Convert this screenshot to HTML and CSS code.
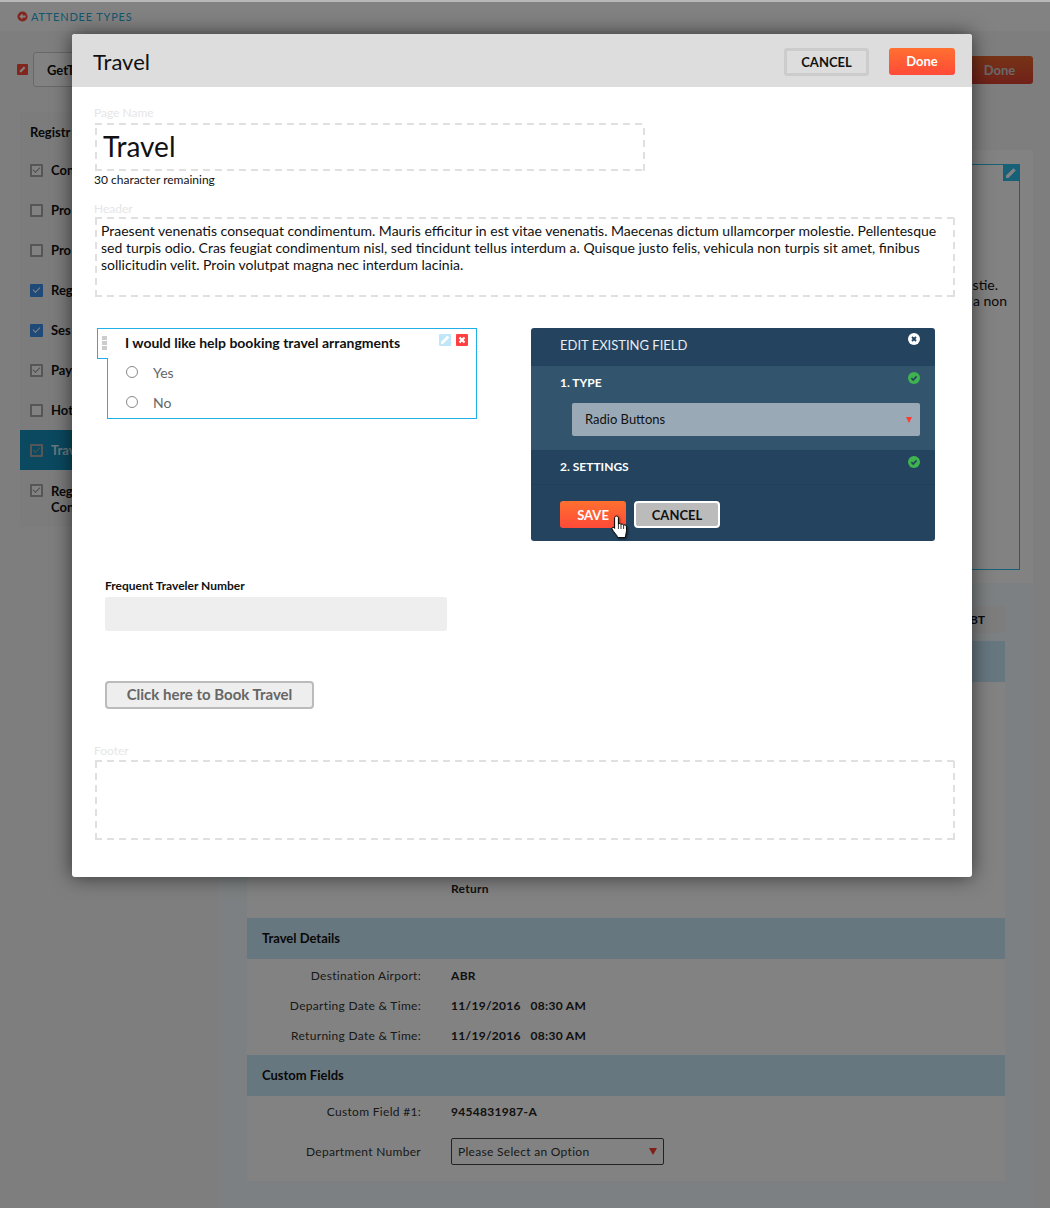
FILE: index.html
```html
<!DOCTYPE html>
<html lang="en">
<head>
    <meta charset="UTF-8">
    <meta name="viewport" content="width=device-width, initial-scale=1.0">
    <title>Travel - Edit Page</title>
    <link rel="stylesheet" href="styles.css">
</head>
<body>
    <div class="page">
        <div class="top-bar">
            <svg class="back-icon" viewBox="0 0 12 12"><circle cx="6" cy="6" r="5.5" fill="#ff4a38"/><path d="M2.5 6 6 2.8V5h3.5v2H6v2.2z" fill="#fff"/></svg>
            <span class="back-link">ATTENDEE TYPES</span>
        </div>

        <div class="title-row">
            <span class="edit-badge">
                <svg viewBox="0 0 12 12"><path d="M3 7.4 7.6 2.8 9.2 4.4 4.6 9H3z" fill="#fff"/></svg>
            </span>
            <div class="event-name">GetT</div>
            <div class="title-done">Done</div>
        </div>

        <div class="content">
            <aside class="sidebar">
                <h4>Registr</h4>
                <ul class="step-list">
                    <li class="step"><span class="box grey"></span>Con</li>
                    <li class="step"><span class="box"></span>Pro</li>
                    <li class="step"><span class="box"></span>Pro</li>
                    <li class="step"><span class="box blue"></span>Reg</li>
                    <li class="step"><span class="box blue"></span>Ses</li>
                    <li class="step"><span class="box grey"></span>Pay</li>
                    <li class="step"><span class="box"></span>Hot</li>
                    <li class="step active"><span class="box grey"></span>Trav</li>
                    <li class="step tall"><span class="box grey"></span>Reg<br>Con</li>
                </ul>
            </aside>

            <main class="main">
                <section class="preview">
                    <div class="preview-box">
                        <span class="preview-pencil">
                            <svg viewBox="0 0 16 16"><path d="M3 10.600 10.400 3.200 12.800 5.600 5.400 13H3z" fill="#fff"/></svg>
                        </span>
                        <p class="preview-line first">stie.</p>
                        <p class="preview-line">la non</p>
                    </div>
                </section>

                <section class="summary">
                    <div class="summary-actions"><span class="summary-btn">BT</span></div>
                    <div class="summary-card">
                        <div class="section-head"></div>
                        <div class="flight-rows">
                            <div class="row"><span class="row-label"></span><span class="row-value">Return</span></div>
                        </div>
                        <h3 class="section-head">Travel Details</h3>
                        <div class="detail-rows">
                            <div class="row"><span class="row-label">Destination Airport:</span><span class="row-value">ABR</span></div>
                            <div class="row"><span class="row-label">Departing Date &amp; Time:</span><span class="row-value">11/19/2016 &nbsp; 08:30 AM</span></div>
                            <div class="row"><span class="row-label">Returning Date &amp; Time:</span><span class="row-value">11/19/2016 &nbsp; 08:30 AM</span></div>
                        </div>
                        <h3 class="section-head">Custom Fields</h3>
                        <div class="custom-rows">
                            <div class="row"><span class="row-label">Custom Field #1:</span><span class="row-value">9454831987-A</span></div>
                            <div class="row select-row">
                                <span class="row-label">Department Number</span>
                                <div class="page-select">Please Select an Option<span class="caret"></span></div>
                            </div>
                        </div>
                    </div>
                </section>
            </main>
        </div>
    </div>

    <div class="overlay">
        <div class="modal">
            <div class="modal-head">
                <h2>Travel</h2>
                <div class="modal-actions">
                    <button class="btn-cancel">CANCEL</button>
                    <button class="btn-done">Done</button>
                </div>
            </div>

            <div class="modal-body">
                <label class="ghost-label">Page Name</label>
                <div class="dashed name-box">Travel</div>
                <p class="remaining">30 character remaining</p>

                <label class="ghost-label header-label">Header</label>
                <div class="dashed header-box">Praesent venenatis consequat condimentum. Mauris efficitur in est vitae venenatis. Maecenas dictum ullamcorper molestie. Pellentesque sed turpis odio. Cras feugiat condimentum nisl, sed tincidunt tellus interdum a. Quisque justo felis, vehicula non turpis sit amet, finibus sollicitudin velit. Proin volutpat magna nec interdum lacinia.</div>

                <div class="field-row">
                    <div class="field-card">
                        <span class="field-tab"><i></i><i></i><i></i></span>
                        <div class="field-tools">
                            <span class="tool tool-edit">
                                <svg viewBox="0 0 12 12"><path d="M2 8 8.400 1.600 10.400 3.600 4 10H2z" fill="#fff"/></svg>
                            </span>
                            <span class="tool tool-del">
                                <svg viewBox="0 0 12 12"><path d="M3.500 3.500 8.500 8.500M8.500 3.500 3.500 8.500" stroke="#fff" stroke-width="2.200"/></svg>
                            </span>
                        </div>
                        <div class="field-title">I would like help booking travel arrangments</div>
                        <div class="radio-line"><span class="radio"></span>Yes</div>
                        <div class="radio-line"><span class="radio"></span>No</div>
                    </div>

                    <div class="editor">
                        <div class="editor-title">EDIT EXISTING FIELD
                            <svg class="editor-icon close-icon" viewBox="0 0 12 12"><circle cx="6" cy="6" r="6" fill="#fff"/><path d="M4 4 8 8M8 4 4 8" stroke="#23435e" stroke-width="1.800"/></svg>
                        </div>
                        <div class="editor-type">
                            <div class="editor-step">1. TYPE
                                <svg class="editor-icon" viewBox="0 0 12 12"><circle cx="6" cy="6" r="6" fill="#3fb34f"/><path d="M3.400 6.200 5.200 8 8.600 4.400" fill="none" stroke="#23435e" stroke-width="1.700"/></svg>
                            </div>
                            <div class="editor-select">Radio Buttons<span class="caret red"></span></div>
                        </div>
                        <div class="editor-settings">
                            <div class="editor-step">2. SETTINGS
                                <svg class="editor-icon" viewBox="0 0 12 12"><circle cx="6" cy="6" r="6" fill="#3fb34f"/><path d="M3.400 6.200 5.200 8 8.600 4.400" fill="none" stroke="#23435e" stroke-width="1.700"/></svg>
                            </div>
                        </div>
                        <div class="editor-actions">
                            <button class="btn-save">SAVE</button>
                            <button class="btn-editor-cancel">CANCEL</button>
                            <svg class="hand" viewBox="0 0 17 24"><path d="M5.500 1C6.600 1 7.400 1.800 7.400 3V9C8 8.300 9.600 8.400 10 9.500 10.600 8.800 12.200 9 12.600 10.200 13.300 9.600 15.200 9.900 15.400 11.600 15.700 14 15.600 17 15 19 14.700 20 14.300 21 14.300 22.600H6.600C6.400 21 5.400 20 4.400 18.800 3.200 17.300 1.800 15.600 1 14 .5 12.800 2 11.700 3 12.600L3.600 13.400V3C3.600 1.800 4.400 1 5.500 1Z" fill="#fff" stroke="#000" stroke-width="1" stroke-linejoin="round"/><path d="M7.400 9V14M10 9.500V14M12.600 10.200V14" stroke="#000" stroke-width=".8" fill="none"/></svg>
                        </div>
                    </div>
                </div>

                <label class="input-label">Frequent Traveler Number</label>
                <div class="text-input"></div>

                <button class="btn-book">Click here to Book Travel</button>

                <label class="ghost-label footer-label">Footer</label>
                <div class="dashed footer-box"></div>
            </div>
        </div>
    </div>
</body>
</html>
```

FILE: styles.css
```css
* {
    margin: 0;
    padding: 0;
    box-sizing: border-box;
    font-family: 'Lato', 'Open Sans', sans-serif;
}

body {
    position: relative;
    height: 1208px;
    overflow: hidden;
    background-color: #f8f8f8;
    color: #111;
}

svg {
    display: block;
}

/* page behind the dialog */
.top-bar {
    display: flex;
    align-items: center;
    gap: 3px;
    height: 31px;
    padding-left: 17px;
    background-color: #fff;
    border-top: 2px solid #b8b8b8;
}

.back-icon {
    width: 11px;
    height: 11px;
}

.back-link {
    font-size: 11px;
    letter-spacing: 0.8px;
    color: #27a9d6;
}

.title-row {
    display: flex;
    align-items: center;
    height: 35px;
    margin-top: 21px;
    padding: 0 17px;
}

.edit-badge {
    display: flex;
    width: 11px;
    height: 11px;
    margin-right: 5px;
    background-color: #ff4a38;
    border-radius: 1px;
}

.event-name {
    width: 300px;
    height: 35px;
    padding: 9px 13px;
    font-size: 13px;
    font-weight: 700;
    background-color: #fff;
    border: 1px solid #ccc;
    border-radius: 3px;
}

.title-done {
    width: 67px;
    height: 28px;
    margin-left: auto;
    font-size: 13px;
    font-weight: 700;
    line-height: 28px;
    text-align: center;
    color: #ccc;
    background: linear-gradient(#e8642c, #dc4232);
    border-radius: 3px;
}

.content {
    display: grid;
    grid-template-columns: 198px 815px;
    align-items: start;
    margin: 25px 0 0 20px;
}

.sidebar {
    height: 415px;
    background-color: #f3f3f3;
}

.sidebar h4 {
    height: 38px;
    padding: 12px 0 0 10px;
    font-size: 13px;
}

.step {
    display: flex;
    align-items: center;
    height: 40px;
    padding-left: 10px;
    font-size: 13px;
    font-weight: 700;
    list-style: none;
}

.step.tall {
    align-items: flex-start;
    height: 56px;
    padding-top: 13px;
    line-height: 16px;
}

.step.active {
    color: #cdeaf5;
    background-color: #1590bc;
}

.step.active .box {
    background-color: #1590bc;
}

.box {
    position: relative;
    flex: none;
    width: 13px;
    height: 13px;
    margin-right: 8px;
    background-color: #fff;
    border: 2px solid #aaa;
    border-radius: 1px;
}

.step.tall .box {
    margin-top: 1px;
}

.box.grey::after,
.box.blue::after {
    content: "";
    position: absolute;
    left: 1px;
    top: 1px;
    width: 6px;
    height: 3px;
    border-left: 1.5px solid #999;
    border-bottom: 1.5px solid #999;
    transform: rotate(-45deg);
}

.box.blue {
    background-color: #3d8fe8;
    border-color: #3d8fe8;
}

.box.blue::after {
    border-color: #fff;
}

.main {
    margin-top: 38px;
}

.preview {
    height: 433px;
    padding: 14px 13px 13px 0;
    background-color: #fff;
}

.preview-box {
    position: relative;
    height: 406px;
    padding-top: 112px;
    border: 1px solid #2cbdec;
}

.preview-pencil {
    position: absolute;
    top: 0;
    right: 0;
    width: 16px;
    height: 16px;
    background-color: #2cbdec;
}

.preview-line {
    padding-right: 12px;
    font-size: 14px;
    line-height: 16px;
    text-align: right;
}

.preview-line.first {
    padding-right: 21px;
}

.summary {
    height: 625px;
    padding: 23px 28px 0 29px;
    background-color: #f4fbff;
}

.summary-actions {
    display: flex;
    justify-content: flex-end;
    height: 35px;
}

.summary-btn {
    width: 45px;
    height: 27px;
    padding: 0 20px 0 10px;
    font-size: 12px;
    font-weight: 700;
    line-height: 27px;
    text-align: right;
    background-color: #f5f5f5;
    border-radius: 3px;
}

.summary-card {
    height: 540px;
    background-color: #fff;
}

.section-head {
    height: 41px;
    padding-left: 15px;
    font-size: 13px;
    font-weight: 700;
    line-height: 41px;
    background-color: #cbeafb;
}

.flight-rows {
    display: flex;
    flex-direction: column;
    justify-content: flex-end;
    height: 236px;
    padding-bottom: 15px;
}

.row {
    display: grid;
    grid-template-columns: 174px auto;
    column-gap: 30px;
    align-items: center;
    height: 30px;
    font-size: 12px;
    letter-spacing: 0.3px;
}

.row-label {
    text-align: right;
    color: #333;
}

.row-value {
    font-weight: 700;
    color: #222;
}

.detail-rows {
    height: 96px;
    padding-top: 1px;
}

.select-row {
    height: 40px;
    padding-top: 11px;
}

.page-select {
    position: relative;
    width: 213px;
    height: 27px;
    padding-left: 6px;
    line-height: 25px;
    color: #333;
    background-color: #fff;
    border: 1px solid #444;
    border-radius: 2px;
}

.caret {
    position: absolute;
    top: 9px;
    right: 6px;
    border-left: 4px solid transparent;
    border-right: 4px solid transparent;
    border-top: 7px solid #ff3b30;
}

/* dialog */
.overlay {
    position: absolute;
    top: 2px;
    right: 0;
    bottom: 0;
    left: 0;
    background-color: rgba(0, 0, 0, 0.49);
}

.modal {
    position: absolute;
    top: 32px;
    left: 72px;
    width: 900px;
    height: 843px;
    background-color: #fff;
    border-radius: 3px;
    box-shadow: 0 0 20px rgba(0, 0, 0, 0.6);
}

.modal-head {
    display: flex;
    align-items: center;
    justify-content: space-between;
    height: 53px;
    padding: 0 17px 0 21px;
    background-color: #ddd;
    border-radius: 3px 3px 0 0;
}

.modal-head h2 {
    margin-top: 2px;
    font-size: 22px;
    font-weight: 400;
    color: #111;
}

.modal-actions {
    display: flex;
    gap: 20px;
    margin-top: 2px;
}

button {
    cursor: pointer;
    border-radius: 3px;
    font-weight: 700;
}

.btn-cancel {
    width: 85px;
    height: 28px;
    font-size: 13px;
    color: #111;
    background-color: #ddd;
    border: 3px solid #ccc;
}

.btn-done {
    width: 66px;
    height: 27px;
    font-size: 13px;
    color: #fff;
    background: linear-gradient(#ff7030, #ff4a38);
    border: none;
}

.modal-body {
    padding: 20px 17px 0 23px;
}

.ghost-label {
    display: block;
    height: 16px;
    margin-left: -1px;
    font-size: 12px;
    line-height: 12px;
    color: #e6e6e6;
}

/* long dashes, a plain dashed border draws them too short */
.dashed {
    background:
        repeating-linear-gradient(90deg, #e0e0e0 0 7px, transparent 7px 12px) top / 100% 2px no-repeat,
        repeating-linear-gradient(90deg, #e0e0e0 0 7px, transparent 7px 12px) bottom / 100% 2px no-repeat,
        repeating-linear-gradient(0deg, #e0e0e0 0 7px, transparent 7px 12px) left / 2px 100% no-repeat,
        repeating-linear-gradient(0deg, #e0e0e0 0 7px, transparent 7px 12px) right / 2px 100% no-repeat;
}

.name-box {
    width: 550px;
    height: 48px;
    padding-left: 8px;
    font-size: 28px;
    line-height: 46px;
    color: #111;
}

.remaining {
    margin: 1px 0 0 -1px;
    font-size: 12px;
    line-height: 16px;
}

.header-label {
    height: 14px;
    margin-top: 15px;
}

.header-box {
    width: 860px;
    height: 80px;
    padding: 5px 6px;
    font-size: 14px;
    line-height: 17px;
    color: #111;
}

.field-row {
    display: flex;
    align-items: flex-start;
    height: 250px;
    margin-top: 31px;
    margin-left: 12px;
}

.field-card {
    position: relative;
    width: 370px;
    height: 91px;
    padding: 4px 0 0 17px;
    background-color: #fff;
    border: 1px solid #1fb0e8;
}

.field-tab {
    position: absolute;
    top: -1px;
    left: -11px;
    display: flex;
    flex-direction: column;
    gap: 1px;
    width: 11px;
    height: 31px;
    padding: 7px 0 0 4px;
    background-color: #fff;
    border: 1px solid #1fb0e8;
    border-right: none;
}

.field-tab i {
    width: 5px;
    height: 4px;
    background-color: #ccc;
}

.field-tools {
    position: absolute;
    top: 5px;
    right: 8px;
    display: flex;
    gap: 5px;
}

.tool {
    width: 12px;
    height: 12px;
    border-radius: 1px;
}

.tool-edit {
    background-color: #bfe7f7;
}

.tool-del {
    background-color: #ff4040;
}

.field-title {
    height: 24px;
    font-size: 14px;
    font-weight: 700;
    line-height: 19px;
    color: #111;
}

.radio-line {
    display: flex;
    align-items: center;
    height: 30px;
    padding-left: 1px;
    font-size: 14px;
    color: #666;
}

.radio {
    width: 12px;
    height: 12px;
    margin-right: 15px;
    border: 1px solid #888;
    border-radius: 50%;
}

.editor {
    width: 404px;
    height: 213px;
    margin-left: 54px;
    color: #fff;
    background-color: #23435e;
    border-radius: 3px;
}

.editor-title {
    position: relative;
    height: 38px;
    padding-left: 29px;
    font-size: 13px;
    line-height: 35px;
    color: #e8ecf0;
}

.editor-icon {
    position: absolute;
    top: 6px;
    right: 15px;
    width: 12px;
    height: 12px;
}

.close-icon {
    top: 5px;
}

.editor-type {
    height: 84px;
    background-color: #33546d;
}

.editor-step {
    position: relative;
    padding: 9px 0 0 29px;
    font-size: 12px;
    font-weight: 700;
    line-height: 16px;
}

.editor-select {
    position: relative;
    width: 348px;
    height: 33px;
    margin: 12px 0 0 41px;
    padding-left: 13px;
    font-size: 13px;
    line-height: 33px;
    color: #111;
    background-color: #9aa9b6;
    border-radius: 2px;
}

.caret.red {
    top: 14px;
    right: 8px;
    border-left-width: 3.5px;
    border-right-width: 3.5px;
    border-top-width: 6px;
}

.editor-settings {
    height: 35px;
    border-bottom: 1px solid #20405a;
}

.editor-actions {
    position: relative;
    display: flex;
    gap: 8px;
    padding: 16px 0 0 29px;
}

.btn-save {
    width: 66px;
    height: 27px;
    font-size: 13px;
    color: #fff;
    background: linear-gradient(#ff7030, #ff4a38);
    border: none;
}

.btn-editor-cancel {
    width: 86px;
    height: 27px;
    font-size: 13px;
    color: #111;
    background-color: #bbb;
    border: 2px solid #fff;
    border-radius: 4px;
}

.hand {
    position: absolute;
    top: 30px;
    left: 80px;
    width: 17px;
    height: 24px;
    filter: drop-shadow(1px 1px 1px rgba(0, 0, 0, 0.5));
}

.input-label {
    display: block;
    margin-left: 10px;
    font-size: 12px;
    font-weight: 700;
    line-height: 16px;
    color: #111;
}

.text-input {
    width: 342px;
    height: 34px;
    margin: 3px 0 0 10px;
    background-color: #eee;
    border-radius: 2px;
}

.btn-book {
    display: block;
    width: 209px;
    height: 28px;
    margin: 50px 0 0 10px;
    padding-bottom: 2px;
    font-size: 15px;
    color: #666;
    background-color: #eee;
    border: 2px solid #bbb;
    border-radius: 4px;
}

.footer-label {
    height: 15px;
    margin-top: 36px;
}

.footer-box {
    width: 860px;
    height: 80px;
}
```
